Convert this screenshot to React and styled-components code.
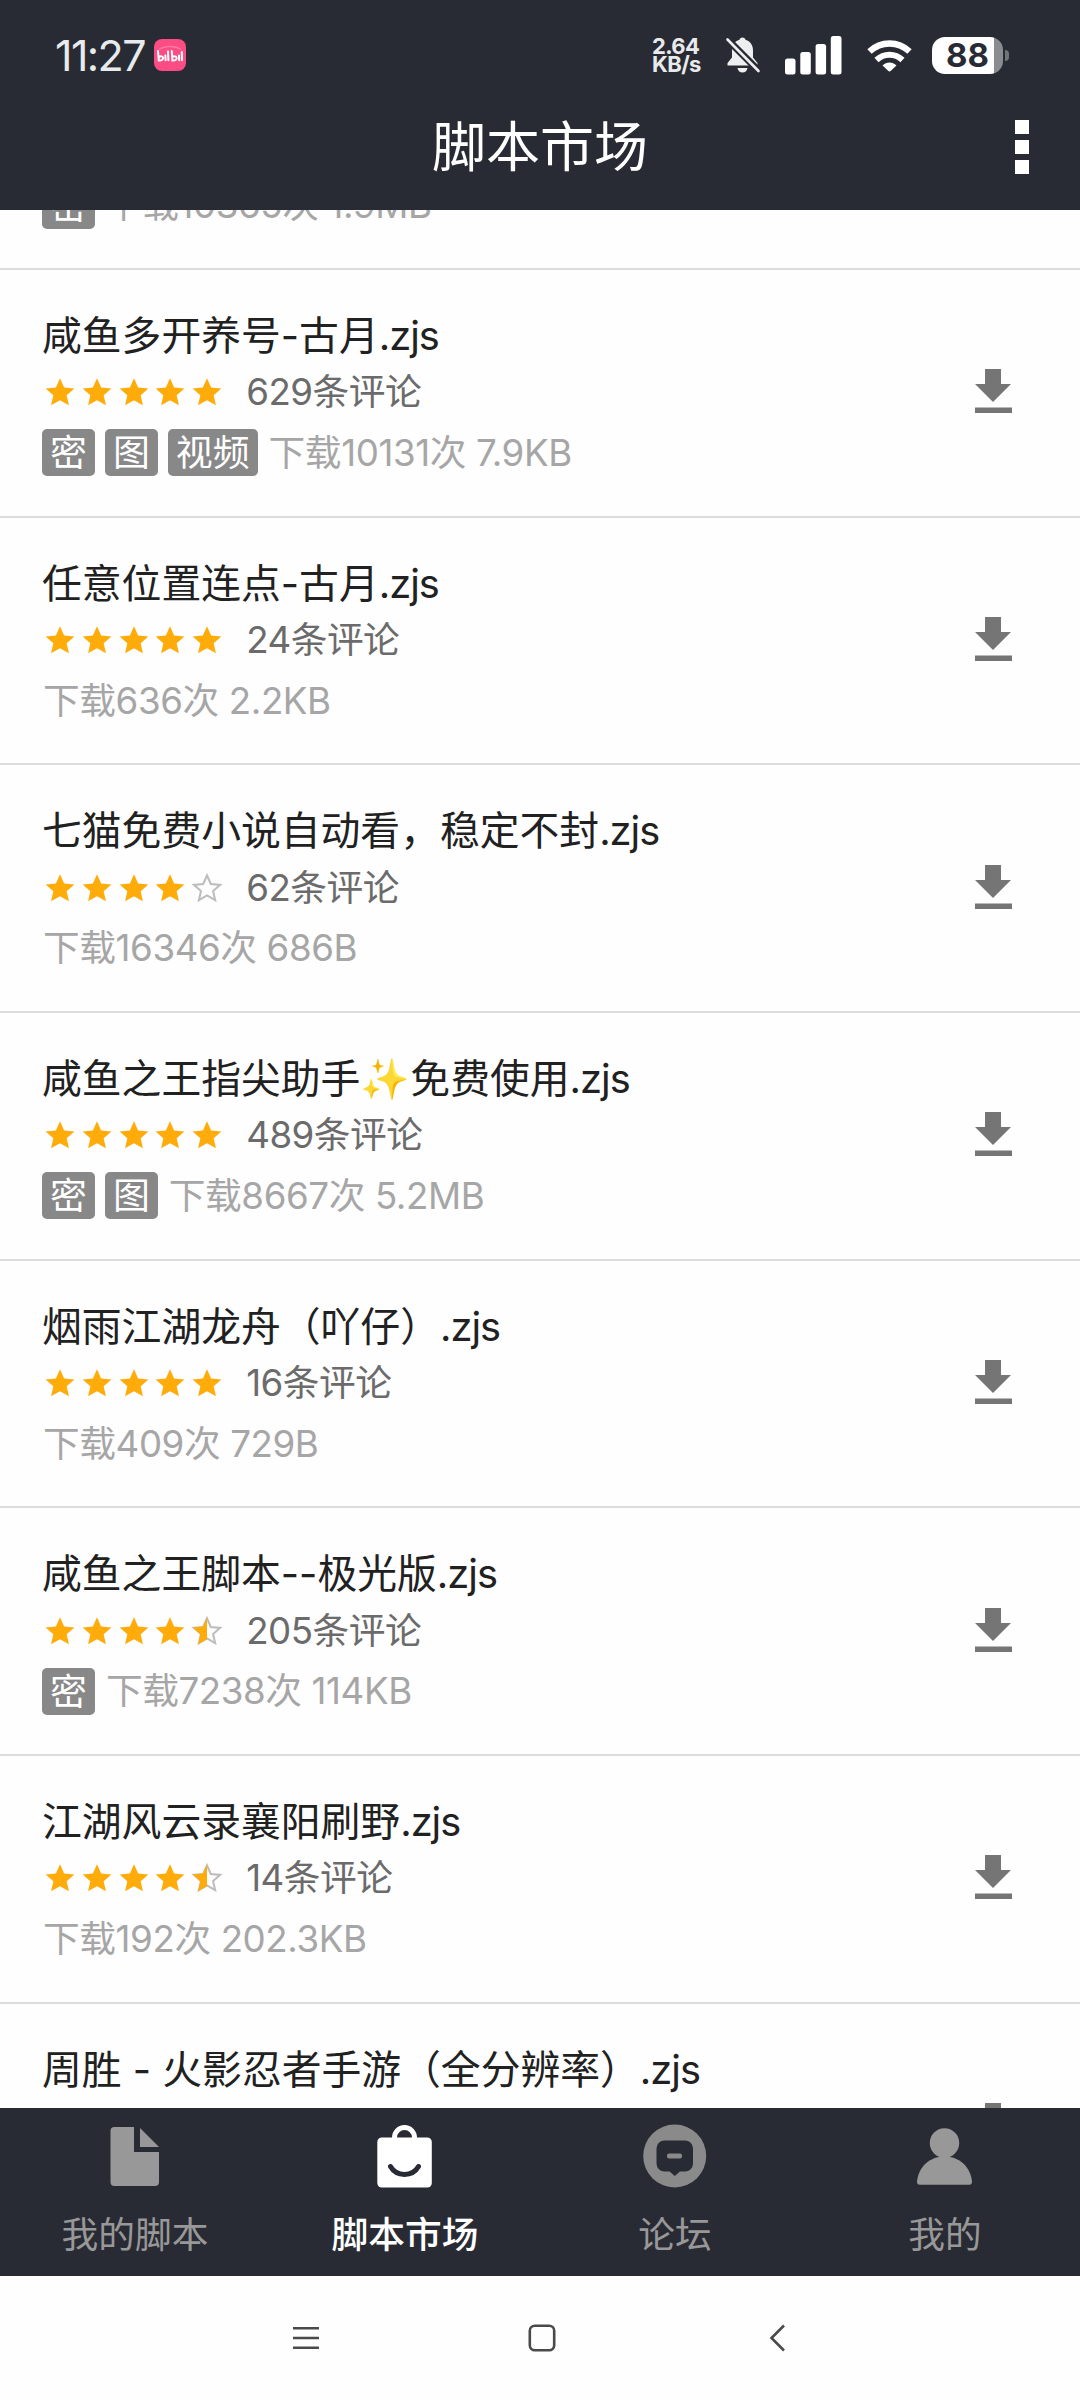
import React from "react";
import styled, { createGlobalStyle } from "styled-components";

const colours = {
  bar: "#292b34",
  page: "#fefefe",
  title: "#212121",
  comment: "#6b6b6b",
  meta: "#a6a6a6",
  tag: "#888888",
  divider: "#dcdcdc",
  star: "#ffab0a",
  starEmpty: "#bdbdbd",
  download: "#757575",
  tabIdle: "#989898",
  systemIcon: "#4a4a4a",
};

const fontStack = `"Inter", "Noto Sans CJK SC", sans-serif`;

const STAR_PATH =
  "M12 1.6l3.1 7.1 7.7.7-5.8 5.1 1.7 7.5L12 18.1l-6.7 3.9 1.7-7.5L1.2 9.4l7.700-.7z";

const scripts = [
  {
    title: "咸鱼多开养号-古月",
    rating: 5,
    comments: "629条评论",
    tags: ["密", "图", "视频"],
    meta: "下载10131次 7.9KB",
  },
  {
    title: "任意位置连点-古月",
    rating: 5,
    comments: "24条评论",
    tags: [],
    meta: "下载636次 2.2KB",
  },
  {
    title: "七猫免费小说自动看，稳定不封",
    rating: 4,
    comments: "62条评论",
    tags: [],
    meta: "下载16346次 686B",
  },
  {
    title: "咸鱼之王指尖助手✨免费使用",
    rating: 5,
    comments: "489条评论",
    tags: ["密", "图"],
    meta: "下载8667次 5.2MB",
  },
  {
    title: "烟雨江湖龙舟（吖仔）",
    rating: 5,
    comments: "16条评论",
    tags: [],
    meta: "下载409次 729B",
  },
  {
    title: "咸鱼之王脚本--极光版",
    rating: 4.5,
    comments: "205条评论",
    tags: ["密"],
    meta: "下载7238次 114KB",
  },
  {
    title: "江湖风云录襄阳刷野",
    rating: 4.5,
    comments: "14条评论",
    tags: [],
    meta: "下载192次 202.3KB",
  },
  {
    title: "周胜 - 火影忍者手游（全分辨率）",
    rating: 5,
    comments: "",
    tags: [],
    meta: "",
  },
];

const Star = ({ fill }) => (
  <StarSvg viewBox="0 0 24 24">
    {fill < 1 && (
      <path
        d={STAR_PATH}
        fill="none"
        stroke={colours.starEmpty}
        strokeWidth="1.7"
        transform="translate(1.1 1.1) scale(.91)"
      />
    )}
    {fill > 0 && (
      <StarFill d={STAR_PATH} fill={colours.star} $half={fill < 1} />
    )}
  </StarSvg>
);

const DownloadIcon = () => (
  <DownloadSvg viewBox="0 0 38 46" fill={colours.download}>
    <path d="M11 1h16v15h10L19 34 1 16h10z" />
    <path d="M1 39.5h37v5.5H1z" />
  </DownloadSvg>
);

const ScriptRow = ({ script }) => (
  <Row>
    <Info>
      <Title>
        {script.title}
        <Extension>.zjs</Extension>
      </Title>
      <Rating>
        <Stars>
          {[0, 1, 2, 3, 4].map((i) => (
            <Star key={i} fill={Math.min(1, Math.max(0, script.rating - i))} />
          ))}
        </Stars>
        <Comments>{script.comments}</Comments>
      </Rating>
      <MetaLine>
        {script.tags.map((tag) => (
          <Tag key={tag}>{tag}</Tag>
        ))}
        <Meta>{script.meta}</Meta>
      </MetaLine>
    </Info>
    <DownloadIcon />
  </Row>
);

const BellOffIcon = () => (
  <svg width="36" height="38" viewBox="0 0 36 38">
    <path
      d="M17.5 1.5c-1.7 0-2.700 1-3 2.200C9.500 5 7 9.500 7 14v7.500l-4.500 5.500v2.500h30V27L28 21.500V14c0-4.500-2.500-9-7.500-10.300-.3-1.200-1.300-2.200-3-2.200z"
      fill="#eceef0"
    />
    <path d="M12.500 32h10c-.5 3-2.500 4.500-5 4.500s-4.500-1.500-5-4.500z" fill="#eceef0" />
    <path d="M1.500 2.500l33 33" stroke={colours.bar} strokeWidth="7" />
    <path
      d="M2.500 3.500l31 31.500"
      stroke="#eceef0"
      strokeWidth="2.6"
      strokeLinecap="round"
    />
  </svg>
);

const SignalIcon = () => (
  <svg width="57" height="39" viewBox="0 0 57 39" fill="#fff">
    <rect x="0" y="22.5" width="10.5" height="16" rx="2.5" />
    <rect x="15.3" y="16" width="10.5" height="22.5" rx="2.5" />
    <rect x="30.6" y="8" width="10.5" height="30.5" rx="2.5" />
    <rect x="45.8" y="0" width="10.7" height="38.5" rx="2.5" />
  </svg>
);

const WifiIcon = () => (
  <svg width="45" height="33" viewBox="0 0 45 33">
    <path
      d="M2.5 12.5C14 1.800 31 1.800 42.500 12.500"
      fill="none"
      stroke="#fff"
      strokeWidth="6.4"
    />
    <path
      d="M9.500 21c7.500-7 18.500-7 26 0"
      fill="none"
      stroke="#fff"
      strokeWidth="6"
    />
    <path d="M15.500 26.500c4-4 10-4 14 0l-5.600 5.300c-.8.800-2 .8-2.800 0z" fill="#fff" />
  </svg>
);

const BiliIcon = () => (
  <svg width="32" height="32" viewBox="0 0 32 32">
    <rect width="32" height="32" rx="8" fill="#fb4c84" />
    <path d="M5 10.500c6-4 16-4 22 0" fill="none" stroke="#fd7ba3" strokeWidth="1.5" />
    <g fill="none" stroke="#fff" strokeWidth="2" strokeLinecap="round">
      <path d="M4 12l.8 9.500c3 .3 4.700-1.200 4.200-3-.4-1.300-2.200-1.500-4-.6" />
      <path d="M11.300 16.500l.3 4.700M14 12.500l.4 8.700" />
      <path d="M17.800 12l.6 9.500c3 .3 4.700-1.200 4.200-3-.4-1.300-2.200-1.500-4-.6" />
      <path d="M25 16.500l.2 4.700M27.800 13l.2 8.200" />
    </g>
  </svg>
);

const FileIcon = () => (
  <svg width="64" height="64" viewBox="0 0 64 64" fill="currentColor">
    <path d="M12 3h19v25h25v30a4 4 0 0 1-4 4H11.500a4 4 0 0 1-4-4V7a4 4 0 0 1 4-4z" />
    <path d="M37 4l19 19H37z" />
  </svg>
);

const BagIcon = () => (
  <svg width="64" height="64" viewBox="0 0 64 64">
    <path
      d="M21.500 16v-2.500a10 10 0 0 1 20 0V16"
      fill="none"
      stroke="currentColor"
      strokeWidth="5"
    />
    <rect x="4.3" y="13.5" width="54.5" height="50" rx="4.5" fill="currentColor" />
    <path
      d="M17.500 42.500c6 10.500 22 10.500 28 0"
      fill="none"
      stroke={colours.bar}
      strokeWidth="5"
      strokeLinecap="round"
    />
  </svg>
);

const ForumIcon = () => (
  <svg width="64" height="64" viewBox="0 0 64 64">
    <circle cx="31.7" cy="32" r="31.5" fill="#8a8a8a" />
    <path
      d="M21.500 16.500h20.500a8 8 0 0 1 8 8v15a8 8 0 0 1-8 8h-5L31.800 52 26.500 47.500h-5a8 8 0 0 1-8-8v-15a8 8 0 0 1 8-8z"
      fill={colours.bar}
    />
    <rect x="24" y="29.5" width="15" height="5" rx="2" fill="#8a8a8a" />
  </svg>
);

const UserIcon = () => (
  <svg width="64" height="64" viewBox="0 0 64 64" fill="currentColor">
    <circle cx="31.5" cy="19" r="14.7" />
    <path d="M4 57.500C5.500 43 16.500 32.500 31.500 32.500S57.500 43 59 57.500c.2 2-1 3.300-2.800 3.300H6.800c-1.800 0-3-1.300-2.800-3.300z" />
  </svg>
);

const tabs = [
  { label: "我的脚本", Icon: FileIcon },
  { label: "脚本市场", Icon: BagIcon, active: true },
  { label: "论坛", Icon: ForumIcon },
  { label: "我的", Icon: UserIcon },
];

const App = () => {
  return (
    <Screen>
      <GlobalStyle />
      <Header>
        <StatusBar>
          <StatusLeft>
            <Clock>11:27</Clock>
            <BiliIcon />
          </StatusLeft>
          <NetSpeed>
            <span>2.64</span>
            <span>KB/s</span>
          </NetSpeed>
          <BellSlot>
            <BellOffIcon />
          </BellSlot>
          <SignalSlot>
            <SignalIcon />
          </SignalSlot>
          <WifiIcon />
          <Battery>
            <BatteryBody>88</BatteryBody>
            <BatteryCap />
          </Battery>
        </StatusBar>
        <TitleBar>
          <PageTitle>脚本市场</PageTitle>
          <MoreButton>
            <MoreDot />
            <MoreDot />
            <MoreDot />
          </MoreButton>
        </TitleBar>
      </Header>

      <List>
        <PreviousRow>
          <MetaLine>
            <Tag>密</Tag>
            <Meta>下载10365次 1.9MB</Meta>
          </MetaLine>
        </PreviousRow>
        {scripts.map((script) => (
          <ScriptRow key={script.title} script={script} />
        ))}
      </List>

      <TabBar>
        {tabs.map(({ label, Icon, active }) => (
          <Tab key={label} $active={active}>
            <Icon />
            <TabLabel $active={active}>{label}</TabLabel>
          </Tab>
        ))}
      </TabBar>

      <SystemNav>
        <svg width="26" height="26" viewBox="0 0 26 26">
          <path
            d="M0 3.300h26M0 13h26M0 22.700h26"
            stroke={colours.systemIcon}
            strokeWidth="2.6"
          />
        </svg>
        <svg width="28" height="28" viewBox="0 0 28 28">
          <rect
            x="1.8"
            y="1.8"
            width="24.4"
            height="24.4"
            rx="5"
            fill="none"
            stroke={colours.systemIcon}
            strokeWidth="2.6"
          />
        </svg>
        <svg width="26" height="28" viewBox="0 0 26 28">
          <path
            d="M19 1.500L6.500 14 19 26.500"
            fill="none"
            stroke={colours.systemIcon}
            strokeWidth="2.6"
          />
        </svg>
      </SystemNav>
    </Screen>
  );
};

export default App;

const GlobalStyle = createGlobalStyle`
  body {
    margin: 0;
    background: ${colours.page};
  }
  svg {
    display: block;
    flex-shrink: 0;
  }
`;

const Screen = styled.div`
  display: flex;
  flex-direction: column;
  width: 1080px;
  height: 2400px;
  overflow: hidden;
  background-color: ${colours.page};
  font-family: ${fontStack};
`;

const Header = styled.header`
  flex: none;
  height: 210px;
  background-color: ${colours.bar};
`;

const StatusBar = styled.div`
  display: flex;
  align-items: center;
  box-sizing: border-box;
  height: 110px;
  padding: 0 71px 0 55px;
`;

const StatusLeft = styled.div`
  display: flex;
  align-items: center;
  flex: 1;
  gap: 9px;
`;

const Clock = styled.span`
  width: 90px;
  color: #e8ebec;
  font-size: 43px;
  line-height: 50px;
  letter-spacing: -1.6px;
  white-space: nowrap;
`;

const NetSpeed = styled.div`
  display: flex;
  flex-direction: column;
  width: 73px;
  color: #e8eaec;
  font-size: 22px;
  font-weight: 700;
  line-height: 18px;
  letter-spacing: -0.6px;
`;

const BellSlot = styled.div`
  width: 60px;
`;

const SignalSlot = styled.div`
  width: 82px;
`;

const Battery = styled.div`
  display: flex;
  align-items: center;
  gap: 2px;
  margin-left: 20px;
`;

const BatteryBody = styled.div`
  display: flex;
  align-items: center;
  box-sizing: border-box;
  width: 71px;
  height: 37px;
  padding-left: 14px;
  border-radius: 13px;
  background: linear-gradient(90deg, #fff 62px, #8a8c92 62px);
  color: ${colours.bar};
  font-size: 33px;
  font-weight: 700;
`;

const BatteryCap = styled.div`
  width: 4px;
  height: 11px;
  border-radius: 0 5px 5px 0;
  background-color: #71737a;
`;

const TitleBar = styled.div`
  display: grid;
  grid-template-columns: 1fr auto 1fr;
  align-items: center;
  height: 74px;
  padding: 0 51px;
`;

const PageTitle = styled.h1`
  grid-column: 2;
  margin: 0;
  padding-top: 2px;
  color: #fff;
  font-size: 54px;
  font-weight: 400;
  line-height: 72px;
`;

const MoreButton = styled.div`
  display: flex;
  flex-direction: column;
  justify-self: end;
  gap: 6px;
`;

const MoreDot = styled.span`
  width: 14px;
  height: 14px;
  background-color: #fff;
`;

const List = styled.main`
  flex: 1;
  min-height: 0;
  overflow: hidden;
`;

const PreviousRow = styled.div`
  display: flex;
  flex-direction: column;
  justify-content: flex-end;
  box-sizing: border-box;
  height: 60px;
  padding: 0 42px 30px;
  border-bottom: 2px solid ${colours.divider};
`;

const Row = styled.div`
  display: flex;
  align-items: center;
  justify-content: space-between;
  box-sizing: border-box;
  height: 247.7px;
  padding: 0 68px 0 42px;
  border-bottom: 2px solid ${colours.divider};
`;

const Info = styled.div`
  display: flex;
  flex-direction: column;
  padding-top: 7px;
`;

const Title = styled.h2`
  margin: 0;
  color: ${colours.title};
  font-size: 39.8px;
  font-weight: 400;
  line-height: 58px;
  white-space: nowrap;
`;

const Extension = styled.span`
  letter-spacing: -1px;
`;

const Rating = styled.div`
  display: flex;
  align-items: center;
  height: 55px;
`;

const Stars = styled.div`
  display: flex;
  gap: 4.8px;
  padding-left: 2px;
`;

const StarSvg = styled.svg`
  width: 32px;
  height: 32px;
`;

const StarFill = styled.path`
  clip-path: ${({ $half }) => ($half ? "inset(0 50% 0 0)" : "none")};
`;

const DownloadSvg = styled.svg`
  width: 38px;
  height: 46px;
  margin-bottom: 3px;
`;

const Comments = styled.span`
  margin-left: 23px;
  color: ${colours.comment};
  font-size: 36.7px;
  line-height: 54px;
  letter-spacing: -0.5px;
  white-space: nowrap;
`;

const MetaLine = styled.div`
  display: flex;
  flex: none;
  align-items: center;
  gap: 10px;
  height: 66px;
`;

const Tag = styled.span`
  padding: 0 8px;
  border-radius: 5px;
  background-color: ${colours.tag};
  color: #fff;
  font-size: 36.9px;
  line-height: 47px;
`;

const Meta = styled.span`
  padding-left: 1px;
  color: ${colours.meta};
  font-size: 36.7px;
  letter-spacing: -0.4px;
  line-height: 54px;
  white-space: nowrap;
`;

const TabBar = styled.nav`
  display: flex;
  flex: none;
  height: 168px;
  background-color: ${colours.bar};
`;

const Tab = styled.div`
  display: flex;
  flex: 1;
  flex-direction: column;
  align-items: center;
  box-sizing: border-box;
  padding-top: 16px;
  gap: 20px;
  color: ${({ $active }) => ($active ? "#fff" : colours.tabIdle)};
`;

const TabLabel = styled.span`
  font-size: 36.7px;
  font-weight: ${({ $active }) => ($active ? 500 : 400)};
  line-height: 54px;
`;

const SystemNav = styled.footer`
  display: flex;
  align-items: center;
  justify-content: center;
  box-sizing: border-box;
  flex: none;
  gap: 209px;
  height: 124px;
  padding-left: 3px;
`;
